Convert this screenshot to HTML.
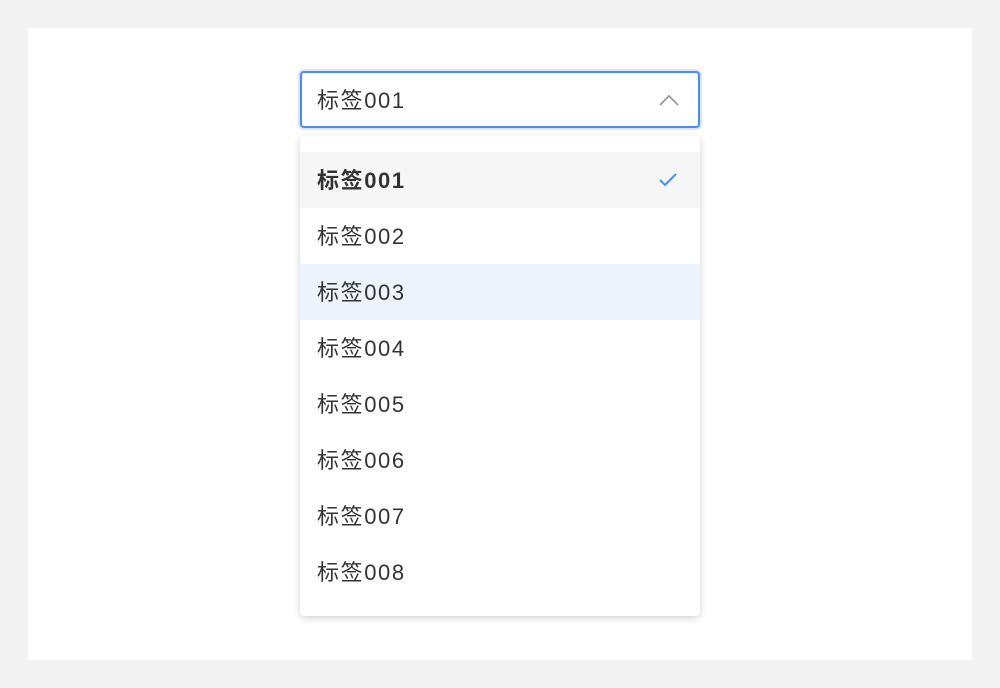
<!DOCTYPE html>
<html><head><meta charset="utf-8"><style>
body{margin:0;width:1000px;height:688px;background:#f3f3f3;font-family:"Liberation Sans","Noto Sans CJK SC",sans-serif;position:relative;overflow:hidden}
.card{position:absolute;left:28px;top:28px;width:944px;height:632px;background:#fff}
.input{position:absolute;left:300px;top:71px;width:396px;height:53px;border:2px solid #4a8cf7;border-radius:4px;box-shadow:0 0 0 2px #d8e6fd;background:#fff}
.input span{position:absolute;left:15px;top:14px;font-size:22px;color:#333;line-height:28px;letter-spacing:1.6px}
.input svg{position:absolute;left:356px;top:20px}
.dd{position:absolute;left:300px;top:136px;width:400px;height:480px;background:#fff;border-radius:4px;box-shadow:0 2px 8px rgba(0,0,0,.18)}
.it{position:absolute;left:0;width:400px;height:56px;font-size:22px;color:#333;line-height:58px;text-indent:17px;letter-spacing:1.6px}
</style></head><body>
<div class="card"></div>
<div class="input"><span>标签001</span><svg width="22" height="14" viewBox="0 0 22 14"><path d="M2 12 L11 3 L20 12" fill="none" stroke="#999" stroke-width="1.8"/></svg></div>
<div class="dd">
<div class="it" style="top:16px;background:#f6f6f6;font-weight:bold">标签001<svg style="position:absolute;left:358px;top:20px" width="20" height="16" viewBox="0 0 20 16"><path d="M2 8 L7 13 L18 2" fill="none" stroke="#4a8cf7" stroke-width="2"/></svg></div>
<div class="it" style="top:72px">标签002</div>
<div class="it" style="top:128px;background:#edf4fe">标签003</div>
<div class="it" style="top:184px">标签004</div>
<div class="it" style="top:240px">标签005</div>
<div class="it" style="top:296px">标签006</div>
<div class="it" style="top:352px">标签007</div>
<div class="it" style="top:408px">标签008</div>
</div>
</body></html>
